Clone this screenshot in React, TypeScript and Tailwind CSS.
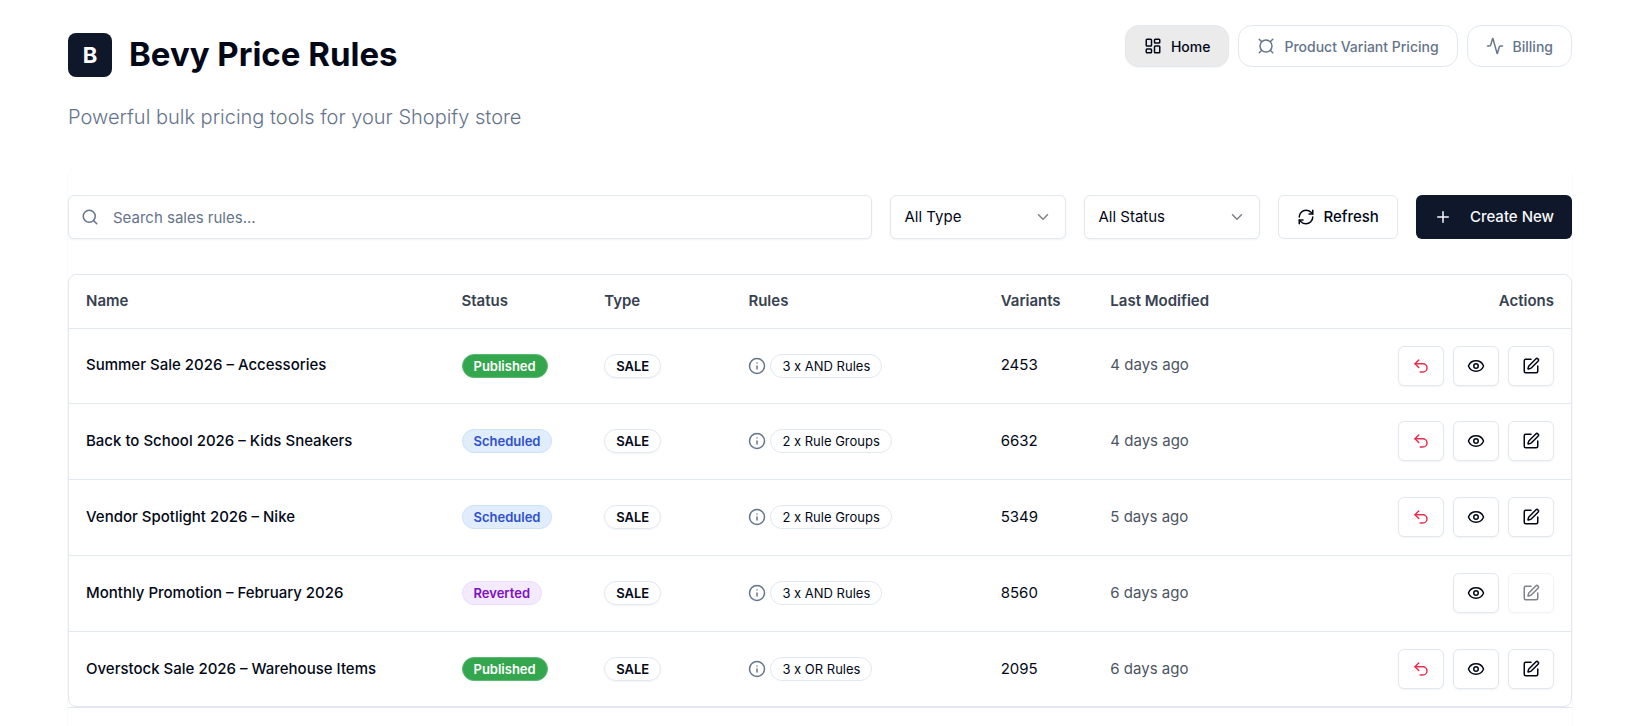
import {
  Activity,
  ChevronDown,
  Currency,
  Eye,
  Info,
  LayoutDashboard,
  Plus,
  RefreshCw,
  Search,
  SquarePen,
  Undo2,
} from "lucide-react";

type Status = "Published" | "Scheduled" | "Reverted";

interface SaleRule {
  name: string;
  status: Status;
  rules: string;
  variants: number;
  modified: string;
}

const saleRules: SaleRule[] = [
  { name: "Summer Sale 2026 – Accessories", status: "Published", rules: "3 x AND Rules", variants: 2453, modified: "4 days ago" },
  { name: "Back to School 2026 – Kids Sneakers", status: "Scheduled", rules: "2 x Rule Groups", variants: 6632, modified: "4 days ago" },
  { name: "Vendor Spotlight 2026 – Nike", status: "Scheduled", rules: "2 x Rule Groups", variants: 5349, modified: "5 days ago" },
  { name: "Monthly Promotion – February 2026", status: "Reverted", rules: "3 x AND Rules", variants: 8560, modified: "6 days ago" },
  { name: "Overstock Sale 2026 – Warehouse Items", status: "Published", rules: "3 x OR Rules", variants: 2095, modified: "6 days ago" },
];

const statusStyles: Record<Status, string> = {
  Published: "border-[#5bb974] bg-[#34a64d] text-white",
  Scheduled: "border-[#cfe0fb] bg-[#e0edfd] text-[#2f4fd0]",
  Reverted: "border-[#ecdcfd] bg-[#f4eafe] text-[#7e0fc4]",
};

const badge = "inline-flex h-6 items-center whitespace-nowrap rounded-full border px-[11px] text-[13px] leading-4";

const navItem = "flex h-[42px] items-center gap-[9px] rounded-[14px] border border-slate-200 px-[18px] font-medium";

function Nav() {
  return (
    <nav className="flex gap-[9px] text-[14px]">
      <a href="#home" className={`${navItem} bg-[#ebebeb] text-[#020817] shadow-xs`}>
        <LayoutDashboard size={18} />
        Home
      </a>
      <a href="#pricing" className={`${navItem} text-[#64748b]`}>
        <Currency size={18} />
        Product Variant Pricing
      </a>
      <a href="#billing" className={`${navItem} text-[#64748b]`}>
        <Activity size={18} />
        Billing
      </a>
    </nav>
  );
}

function Filter({ label, option }: { label: string; option: string }) {
  return (
    <div className="relative w-44 shrink-0">
      <select
        aria-label={label}
        className="h-11 w-full appearance-none rounded-md border border-slate-200 bg-white px-[13px] shadow-xs"
      >
        <option>{option}</option>
      </select>
      <ChevronDown size={18} className="pointer-events-none absolute top-[13px] right-[14px] opacity-50" />
    </div>
  );
}

function Toolbar() {
  return (
    <div className="flex gap-[18px]">
      <div className="relative flex-1">
        <Search size={18} className="absolute top-[13px] left-[13px] text-[#64748b]" />
        <input
          type="search"
          aria-label="Search sales rules"
          placeholder="Search sales rules..."
          className="h-11 w-full rounded-md border border-slate-200 bg-white pr-3 pl-11 shadow-xs placeholder:text-[#64748b]"
        />
      </div>
      <Filter label="Type" option="All Type" />
      <Filter label="Status" option="All Status" />
      <button className="flex h-11 items-center gap-2 rounded-md border border-slate-200 bg-white px-[18px] font-medium">
        <RefreshCw size={18} />
        Refresh
      </button>
      <button className="flex h-11 items-center gap-[18px] rounded-md bg-[#0f172a] px-[18px] font-medium text-slate-50">
        <Plus size={18} />
        Create New
      </button>
    </div>
  );
}

const actionButton =
  "flex h-10 w-[46px] items-center justify-center rounded-md border border-slate-200 bg-white shadow-xs disabled:opacity-50";

function RuleRow({ rule }: { rule: SaleRule }) {
  const reverted = rule.status === "Reverted";
  return (
    <tr className="h-[76px] border-b border-slate-200 first:h-[75px] last:h-[75px] last:border-b-0">
      <td className="px-[17px] font-medium">{rule.name}</td>
      <td className="px-[17px]">
        <div className="flex">
          <span className={`${badge} font-semibold ${statusStyles[rule.status]}`}>{rule.status}</span>
        </div>
      </td>
      <td className="px-[17px]">
        <div className="flex">
          <span className={`${badge} border-slate-200 font-semibold shadow-xs`}>SALE</span>
        </div>
      </td>
      <td className="px-[17px]">
        <div className="flex items-center gap-1">
          <Info size={18} className="text-[#64748b]" />
          <span className={`${badge} border-slate-200`}>{rule.rules}</span>
        </div>
      </td>
      <td className="px-[17px]">{rule.variants}</td>
      <td className="px-[17px] text-[#4b5563]">{rule.modified}</td>
      <td className="px-[17px]">
        <div className="flex justify-end gap-[9px]">
          {!reverted && (
            <button aria-label="Revert" className={`${actionButton} text-[#e92d51]`}>
              <Undo2 size={18} />
            </button>
          )}
          <button aria-label="View" className={actionButton}>
            <Eye size={18} />
          </button>
          <button aria-label="Edit" disabled={reverted} className={actionButton}>
            <SquarePen size={18} />
          </button>
        </div>
      </td>
    </tr>
  );
}

function RulesTable() {
  return (
    <div className="rounded-lg border border-slate-200 bg-white">
      <table className="w-full table-fixed text-left">
        <thead>
          <tr className="h-[53px] border-b border-slate-200 text-[#374151]">
            <th className="w-[25%] px-[17px] font-semibold">Name</th>
            <th className="w-[9.5%] px-[17px] font-semibold">Status</th>
            <th className="w-[9.6%] px-[17px] font-semibold">Type</th>
            <th className="w-[16.8%] px-[17px] font-semibold">Rules</th>
            <th className="w-[7.3%] px-[17px] font-semibold">Variants</th>
            <th className="px-[17px] font-semibold">Last Modified</th>
            <th className="px-[17px] text-right font-semibold">Actions</th>
          </tr>
        </thead>
        <tbody>
          {saleRules.map((rule) => (
            <RuleRow key={rule.name} rule={rule} />
          ))}
        </tbody>
      </table>
    </div>
  );
}

export default function App() {
  return (
    <div className="min-h-screen bg-white pt-[25px] pr-[70px] pl-[67px] font-['Inter',sans-serif] text-[15px] text-[#020817]">
      <header className="flex items-start justify-between px-px">
        <div className="pt-2">
          <div className="flex items-start gap-[17px]">
            <div className="flex size-11 items-center justify-center rounded-lg bg-[#0f172a] text-[22px] font-bold text-white">
              B
            </div>
            <h1 className="text-[33px] leading-[42px] font-bold">Bevy Price Rules</h1>
          </div>
          <p className="mt-[26px] text-[20px] leading-7 font-light text-[#64748b]">
            Powerful bulk pricing tools for your Shopify store
          </p>
        </div>
        <Nav />
      </header>
      <main className="mt-[37px] rounded-t-xl border-x border-neutral-50 pt-[27px]">
        <Toolbar />
        <div className="mt-[35px]">
          <RulesTable />
        </div>
        <div className="h-5 border-t border-slate-200" />
      </main>
    </div>
  );
}
